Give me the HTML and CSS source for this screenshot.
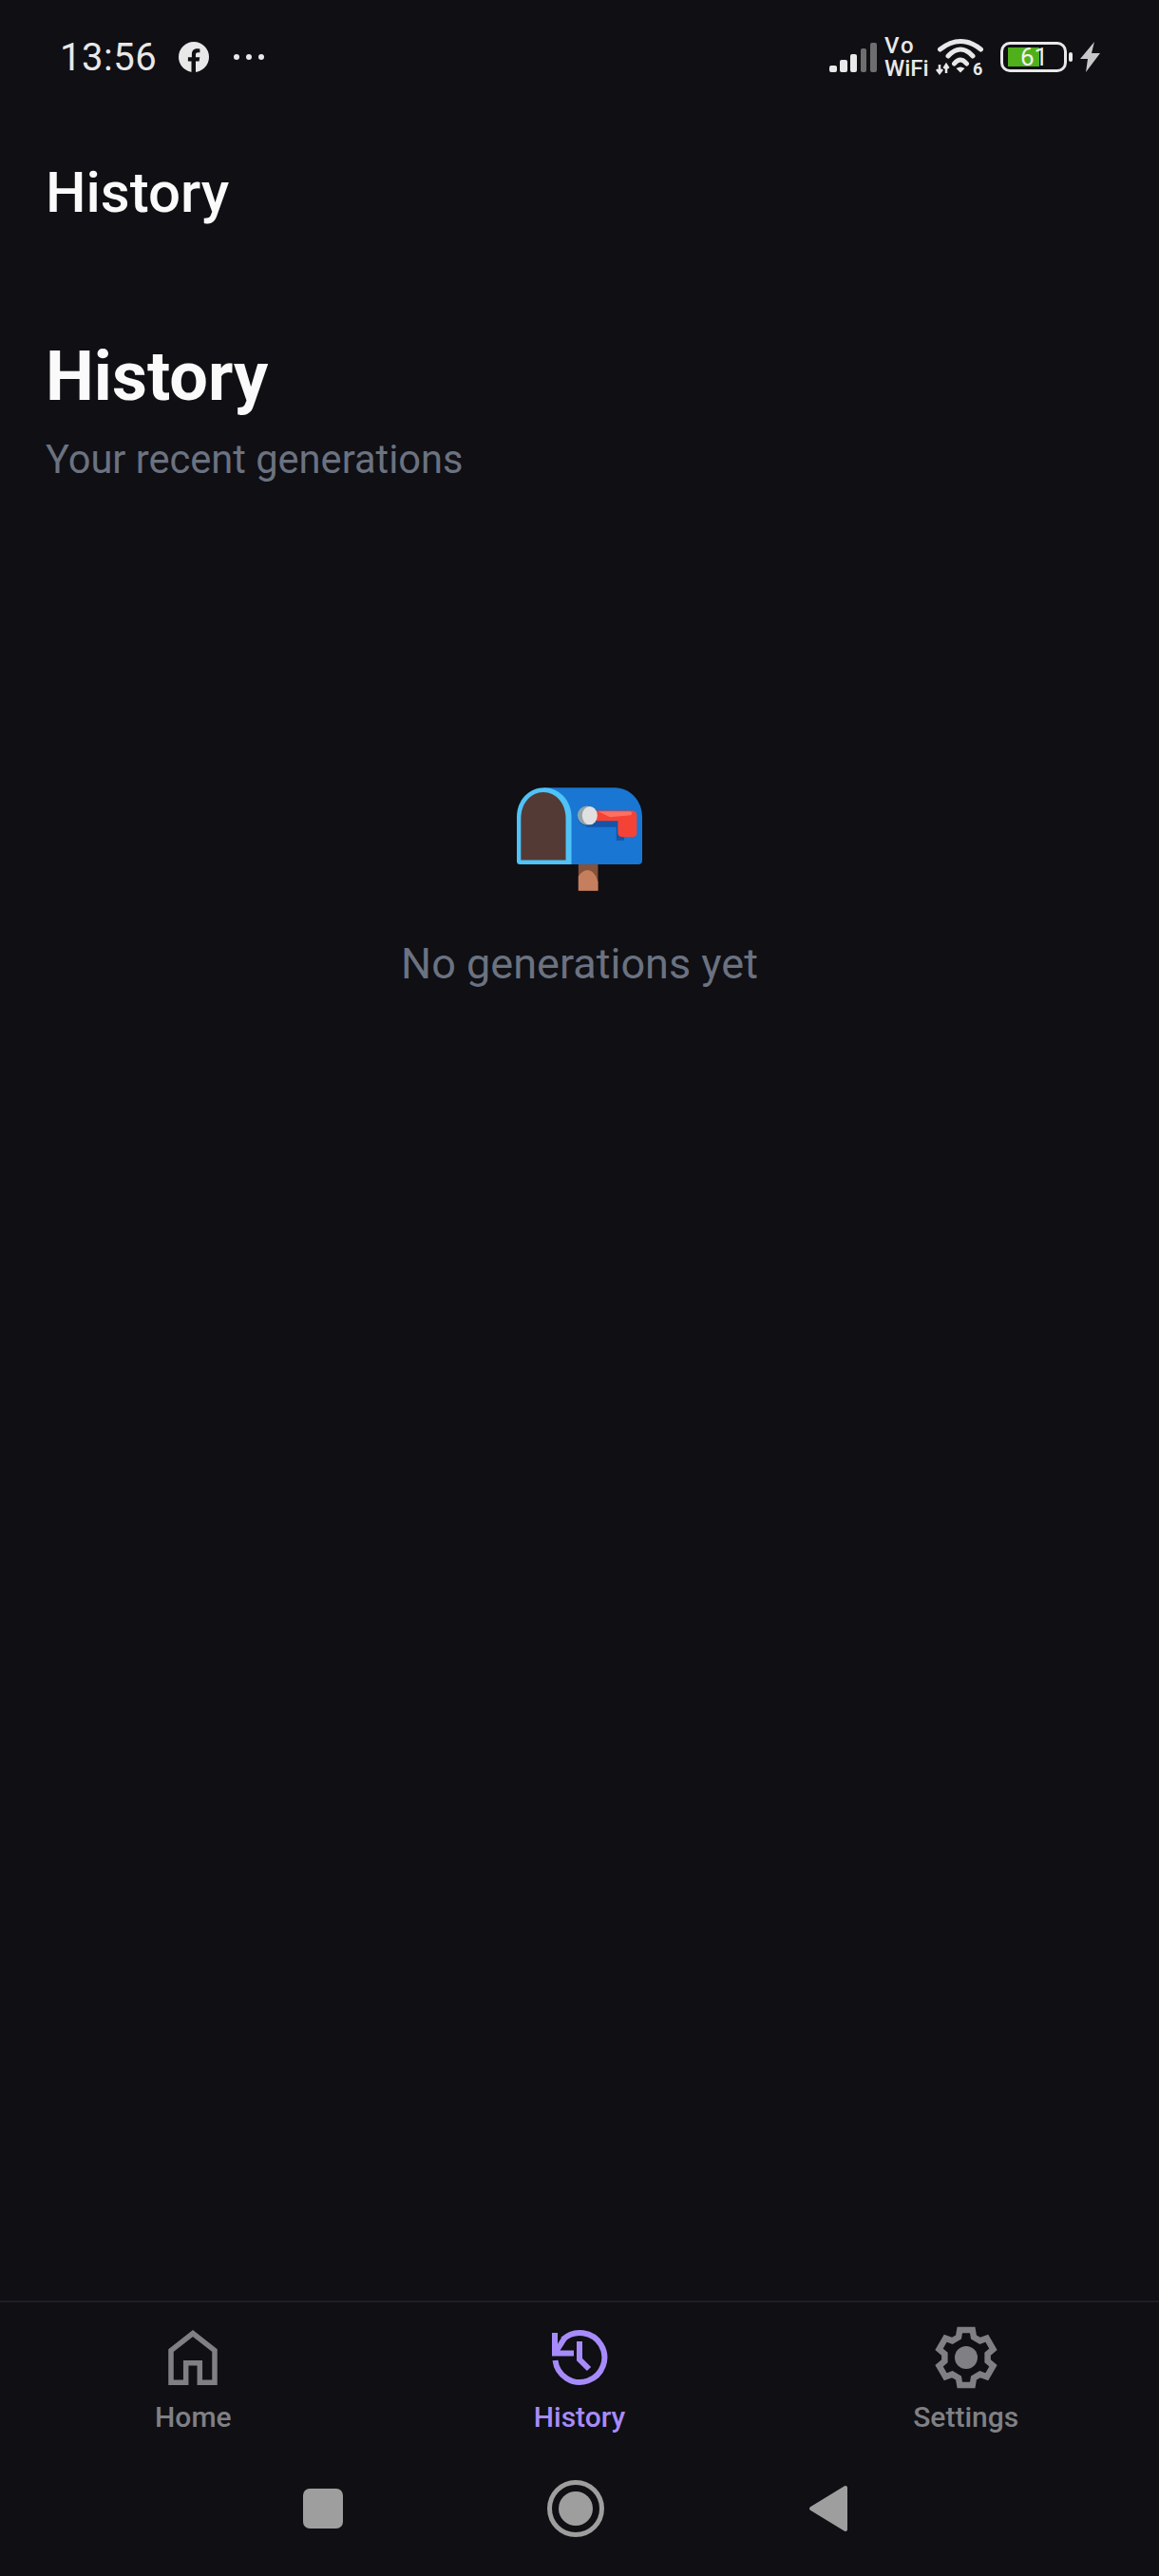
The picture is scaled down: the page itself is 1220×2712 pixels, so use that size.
FILE: index.html
```html
<!DOCTYPE html>
<html lang="en">
<head>
    <meta charset="UTF-8">
    <meta name="viewport" content="width=device-width, initial-scale=1.0">
    <title>History</title>
    <link rel="stylesheet" href="styles.css">
</head>
<body>

<div class="status-bar">
    <div class="status-left">
        <span class="clock">13:56</span>
        <svg class="fb-icon" viewBox="0 0 32 32" width="32" height="32">
            <circle cx="16" cy="16" r="16" fill="#e8e8e8"/>
            <path d="M18 32V20.6h3.6l.7-4.4H18v-2.6c0-1.4.6-2.3 2.4-2.3h2V7.6c-.9-.2-2-.3-3-.3-3.5 0-5.5 2.2-5.5 5.8v3.1H9.9v4.4h3.6V32z" fill="#0f0f14"/>
        </svg>
        <div class="dots"><i></i><i></i><i></i></div>
    </div>
    <div class="status-right">
        <svg class="signal" viewBox="0 0 50 31" width="50" height="31">
            <rect x="0" y="24" width="8" height="7" rx="2" fill="#e8e8e8"/>
            <rect x="11" y="18" width="8" height="13" rx="2" fill="#e8e8e8"/>
            <rect x="22" y="12" width="7" height="19" rx="2" fill="#e8e8e8"/>
            <rect x="33" y="6" width="6" height="25" rx="2" fill="#6e6e6e"/>
            <rect x="43" y="0" width="7" height="31" rx="2" fill="#6e6e6e"/>
        </svg>
        <div class="vowifi"><span class="vo">Vo</span><span>WiFi</span></div>
        <svg class="wifi" viewBox="0 0 54 46" width="54" height="46">
            <g fill="none" stroke="#e8e8e8" stroke-width="5" stroke-linecap="round">
                <path d="M5.5 13Q27-4 48.5 13"/>
                <path d="M14 20Q27 6 40 20"/>
                <path d="M20.5 28Q27 20 33.5 28"/>
            </g>
            <path d="M22.5 33Q27 30 31.5 33L27 37.5z" fill="#e8e8e8"/>
            <path d="M5 29v9M2 34l3 4 3-4M12 38v-9M9.5 33l2.5-4 2.5 4" fill="none" stroke="#e8e8e8" stroke-width="2.5"/>
            <text class="wifi-six" x="40" y="40">6</text>
        </svg>
        <div class="battery">
            <div class="battery-fill"></div>
            <span class="battery-level">61</span>
        </div>
        <div class="battery-nub"></div>
        <svg class="bolt" viewBox="0 0 21 32" width="21" height="32">
            <path d="M15 0L0 18H8L6 32 21 12H12z" fill="#c8c8c8"/>
        </svg>
    </div>
</div>

<div class="app-bar">History</div>

<main class="page">
    <h1>History</h1>
    <p class="subtitle">Your recent generations</p>

    <div class="empty">
        <svg class="mailbox" viewBox="130 87 397 326" width="132" height="109">
            <rect x="325" y="325" width="62" height="88" fill="#85523a"/>
            <path d="M325 413V368Q338 348 354 348 378 350 387 385V413z" fill="#c67f5e"/>
            <path d="M216 87H440C490 87 527 130 527 180V318Q527 330 515 330H216z" fill="#1976d2"/>
            <path d="M130 180C130 125 170 87 216 87 262 87 303 125 303 180V330H140Q130 330 130 320z" fill="#4fc3f7"/>
            <path d="M143 185C143 135 175 101 214 101 253 101 285 135 285 185V316H143z" fill="#543a34"/>
            <path d="M350 178H470V254H445V212H350z" fill="#1554a8"/>
            <path d="M380 160H495Q510 160 510 175V230Q510 243 497 243H464Q450 243 450 230V192H380z" fill="#f44336"/>
            <path d="M388 162H490Q499 168 490 174L425 180z" fill="#ff7061"/>
            <circle cx="352" cy="178" r="30" fill="#1554a8"/>
            <circle cx="352" cy="175" r="30" fill="#90a4ae"/>
            <ellipse cx="361" cy="175" rx="24" ry="29" fill="#e0e0e0"/>
        </svg>
        <p class="empty-text">No generations yet</p>
    </div>
</main>

<nav class="tabs">
    <div class="tab">
        <div class="tab-icon">
            <svg viewBox="0 0 52 58" width="52" height="58">
                <path d="M3 55.3V21.5L26 3.5 49 21.5V55.3H33.3V34.8H18.7V55.3z" fill="none" stroke="#808084" stroke-width="5.5"/>
            </svg>
        </div>
        <span>Home</span>
    </div>
    <div class="tab active">
        <div class="tab-icon">
            <svg viewBox="0 0 60 60" width="60" height="60">
                <g fill="none" stroke="#a78bfa" stroke-width="6">
                    <path d="M12.5 11A26 26 0 1 1 4.500 33"/>
                    <path d="M4 4V25.5H24"/>
                    <path d="M4.5 25L14 10"/>
                    <path d="M30 13V32L40 42"/>
                </g>
            </svg>
        </div>
        <span>History</span>
    </div>
    <div class="tab">
        <div class="tab-icon">
            <svg viewBox="-34 -34 68 68" width="68" height="68">
                <path d="M-6.7-29H6.7L8-21.5 14.62-17.68 21.76-20.3 28.46-8.7 22.62-3.82V3.82L28.46 8.7 21.76 20.3 14.62 17.68 8 21.5 6.7 29H-6.7L-8 21.5-14.62 17.68-21.76 20.3-28.46 8.7-22.62 3.82V-3.82L-28.46-8.7-21.76-20.3-14.62-17.68-8-21.5z" fill="none" stroke="#808084" stroke-width="6.5"/>
                <circle r="12" fill="#808084"/>
            </svg>
        </div>
        <span>Settings</span>
    </div>
</nav>

<div class="system-nav">
    <div class="sys-btn"><div class="sys-square"></div></div>
    <div class="sys-btn"><div class="sys-circle"><i></i></div></div>
    <div class="sys-btn">
        <svg viewBox="0 0 42 50" width="42" height="50">
            <path d="M39 3V47L3 25z" fill="#9e9e9e" stroke="#9e9e9e" stroke-width="4" stroke-linejoin="round"/>
        </svg>
    </div>
</div>

</body>
</html>
```

FILE: styles.css
```css
* {
    box-sizing: border-box;
}

body {
    margin: 0;
    width: 1220px;
    height: 2712px;
    display: flex;
    flex-direction: column;
    overflow: hidden;
    background-color: #0f0f14;
    color: #fafafa;
    font-family: Roboto, sans-serif;
}

.status-bar {
    height: 120px;
    display: flex;
    justify-content: space-between;
    align-items: center;
    padding: 0 62px 0 63px;
    color: #e8e8e8;
}

.status-left,
.status-right {
    display: flex;
    align-items: center;
}

.clock {
    font-size: 40px;
    letter-spacing: 0.5px;
    width: 125px;
}

.fb-icon {
    margin-right: 26px;
}

.dots {
    display: flex;
    gap: 7px;
}

.dots i {
    width: 6px;
    height: 6px;
    border-radius: 50%;
    background-color: #e8e8e8;
}

.signal {
    margin-right: 8px;
}

.vowifi {
    display: flex;
    flex-direction: column;
    font-size: 24px;
    line-height: 24px;
    font-weight: 500;
    width: 53px;
}

.vo {
    letter-spacing: 2px;
}

.wifi {
    margin: 4px 15px 0 0;
}

.wifi-six {
    font-family: Roboto, sans-serif;
    font-size: 18px;
    font-weight: 700;
    fill: #e8e8e8;
}

.battery {
    position: relative;
    width: 70px;
    height: 32px;
    border: 3px solid #e8e8e8;
    border-radius: 10px;
    padding: 3px 5px;
}

.battery-fill {
    width: 33px;
    height: 100%;
    background-color: #4fb01c;
}

.battery-level {
    position: absolute;
    left: 18px;
    top: -1px;
    font-size: 26px;
    line-height: 28px;
    color: #f0f0f0;
}

.battery-nub {
    width: 4px;
    height: 10px;
    margin: 0 8px 0 2px;
    border-radius: 2px;
    background-color: #e8e8e8;
}

.app-bar {
    height: 164px;
    padding-left: 48px;
    display: flex;
    align-items: center;
    font-size: 60px;
    font-weight: 500;
}

.page {
    flex: 1;
    padding: 0 48px;
}

.page h1 {
    margin: 71px 0 0;
    font-size: 72px;
    line-height: 84px;
    font-weight: 700;
}

.subtitle {
    margin: 20px 0 0;
    font-size: 41.6px;
    line-height: 50px;
    color: #6b7280;
}

.empty {
    margin-top: 320px;
    display: flex;
    flex-direction: column;
    align-items: center;
}

.empty-text {
    margin: 50px 0 0;
    font-size: 45px;
    line-height: 54px;
    color: #6b7280;
}

.tabs {
    height: 153px;
    display: flex;
    border-top: 2px solid #1e1e26;
}

.tab {
    flex: 1;
    display: flex;
    flex-direction: column;
    align-items: center;
    font-size: 30px;
    font-weight: 500;
    color: #808084;
}

.tab.active {
    color: #a78bfa;
}

.tab-icon {
    height: 68px;
    margin-top: 24px;
    display: flex;
    align-items: center;
}

.tab span {
    margin-top: 11px;
    line-height: 36px;
}

.system-nav {
    height: 137px;
    display: flex;
    justify-content: center;
    align-items: center;
    padding: 0 8px 6px 0;
}

.sys-btn {
    width: 266px;
    display: flex;
    justify-content: center;
    align-items: center;
}

.sys-square {
    width: 42px;
    height: 42px;
    border-radius: 7px;
    background-color: #9e9e9e;
}

.sys-circle {
    width: 60px;
    height: 60px;
    border: 5px solid #9e9e9e;
    border-radius: 50%;
    display: flex;
    justify-content: center;
    align-items: center;
}

.sys-circle i {
    width: 36px;
    height: 36px;
    border-radius: 50%;
    background-color: #9e9e9e;
}
```
